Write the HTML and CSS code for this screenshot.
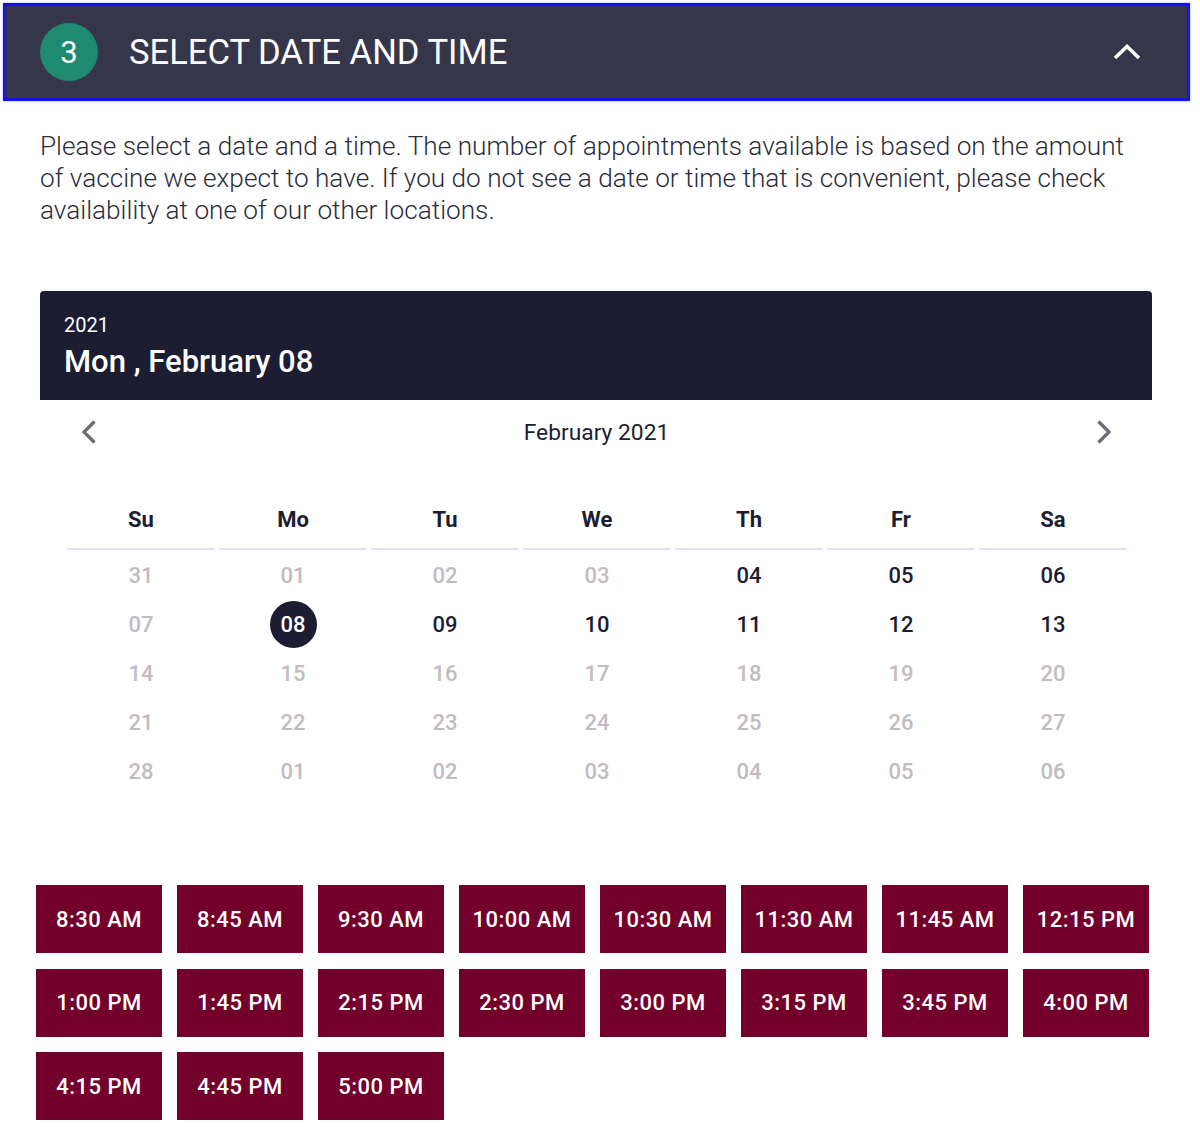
FILE: index.html
```html
<!DOCTYPE html>
<html lang="en">
<head>
<meta charset="utf-8">
<title>Select date and time</title>
<link rel="stylesheet" href="styles.css">
</head>
<body>
<section class="step">
  <header class="step-head">
    <span class="step-num">3</span>
    <h2 class="step-title">SELECT DATE AND TIME</h2>
    <svg class="step-toggle" width="28" height="18" viewBox="0 0 28 18" aria-hidden="true">
      <path d="M2 15 L14 3.5 L26 15" fill="none" stroke="#fff" stroke-width="3.6"/>
    </svg>
  </header>

  <div class="step-body">
    <p class="intro">Please select a date and a time. The number of appointments available is based on the amount of vaccine we expect to have. If you do not see a date or time that is convenient, please check availability at one of our other locations.</p>

    <div class="picker">
      <div class="picker-head">
        <div class="picker-year">2021</div>
        <div class="picker-date">Mon , February 08</div>
      </div>
      <div class="picker-nav">
        <svg class="nav-arrow" width="18" height="26" viewBox="0 0 18 26" aria-hidden="true">
          <path d="M14.5 2.5 L4 13 L14.5 23.5" fill="none" stroke="#6b6c75" stroke-width="3.2"/>
        </svg>
        <div class="nav-month">February 2021</div>
        <svg class="nav-arrow" width="18" height="26" viewBox="0 0 18 26" aria-hidden="true">
          <path d="M3.5 2.5 L14 13 L3.5 23.5" fill="none" stroke="#6b6c75" stroke-width="3.2"/>
        </svg>
      </div>
      <div class="cal">
        <div class="wd">Su</div><div class="wd">Mo</div><div class="wd">Tu</div><div class="wd">We</div><div class="wd">Th</div><div class="wd">Fr</div><div class="wd">Sa</div>

        <div class="d off">31</div><div class="d off">01</div><div class="d off">02</div><div class="d off">03</div><div class="d">04</div><div class="d">05</div><div class="d">06</div>
        <div class="d off">07</div><div class="d"><span class="sel">08</span></div><div class="d">09</div><div class="d">10</div><div class="d">11</div><div class="d">12</div><div class="d">13</div>
        <div class="d off">14</div><div class="d off">15</div><div class="d off">16</div><div class="d off">17</div><div class="d off">18</div><div class="d off">19</div><div class="d off">20</div>
        <div class="d off">21</div><div class="d off">22</div><div class="d off">23</div><div class="d off">24</div><div class="d off">25</div><div class="d off">26</div><div class="d off">27</div>
        <div class="d off">28</div><div class="d off">01</div><div class="d off">02</div><div class="d off">03</div><div class="d off">04</div><div class="d off">05</div><div class="d off">06</div>
      </div>
    </div>

    <div class="times">
      <button class="slot">8:30 AM</button>
      <button class="slot">8:45 AM</button>
      <button class="slot">9:30 AM</button>
      <button class="slot">10:00 AM</button>
      <button class="slot">10:30 AM</button>
      <button class="slot">11:30 AM</button>
      <button class="slot">11:45 AM</button>
      <button class="slot">12:15 PM</button>
      <button class="slot">1:00 PM</button>
      <button class="slot">1:45 PM</button>
      <button class="slot">2:15 PM</button>
      <button class="slot">2:30 PM</button>
      <button class="slot">3:00 PM</button>
      <button class="slot">3:15 PM</button>
      <button class="slot">3:45 PM</button>
      <button class="slot">4:00 PM</button>
      <button class="slot">4:15 PM</button>
      <button class="slot">4:45 PM</button>
      <button class="slot">5:00 PM</button>
    </div>
  </div>
</section>
</body>
</html>
```

FILE: styles.css
```css
* { box-sizing: border-box; }

html, body {
  margin: 0;
  padding: 0;
  background: #ffffff;
  font-family: Roboto, "Liberation Sans", Arial, sans-serif;
}

.step {
  padding: 3px 10px 0 3px;
}

.step-head {
  display: flex;
  align-items: center;
  height: 98px;
  padding: 0 46px 0 34px;
  background: #35364a;
  border: 3px solid #1414f0;
  box-shadow: 0 0 2px rgba(40, 40, 255, 0.5);
}

.step-num {
  display: flex;
  align-items: center;
  justify-content: center;
  width: 58px;
  height: 58px;
  border-radius: 50%;
  background: #1e8a72;
  color: #ffffff;
  font-size: 31px;
  font-weight: 400;
  flex: none;
}

.step-title {
  margin: 0 0 0 31px;
  flex: 1;
  color: #ffffff;
  font-size: 34.6px;
  font-weight: 400;
}

.step-toggle {
  flex: none;
  display: block;
}

.step-body {
  padding: 0 35px 0 37px;
}

.intro {
  margin: 29px 0 0 0;
  width: 1112px;
  font-size: 26.2px;
  line-height: 32px;
  font-weight: 300;
  color: #2c2d3c;
}

.picker {
  margin: 65px 0 0 0;
  width: 1112px;
}

.picker-head {
  height: 109px;
  padding: 22px 24px 0 24px;
  background: #1c1d33;
  border-radius: 4px 4px 0 0;
  color: #ffffff;
}

.picker-year {
  font-size: 20px;
  line-height: 24px;
  font-weight: 400;
}

.picker-date {
  margin-top: 6px;
  font-size: 31px;
  line-height: 38px;
  font-weight: 500;
}

.picker-nav {
  display: flex;
  align-items: center;
  justify-content: space-between;
  height: 64px;
  padding: 0 39px 0 40px;
}

.nav-arrow { display: block; }

.nav-month {
  font-size: 22.8px;
  color: #1c1d33;
}

.cal {
  display: grid;
  grid-template-columns: repeat(7, 152px);
  grid-template-rows: 57px repeat(5, 49px);
  margin: 29px 0 0 25px;
}

.wd {
  display: flex;
  align-items: center;
  justify-content: center;
  margin: 0 2px;
  padding-bottom: 3px;
  border-bottom: 2px solid #e4e2f2;
  font-size: 22px;
  font-weight: 700;
  color: #1c1d33;
}

.d {
  display: flex;
  align-items: center;
  justify-content: center;
  padding-top: 1px;
  font-size: 22px;
  font-weight: 500;
  color: #1c1d33;
}

.d.off { color: #c2bcc2; }

.sel {
  display: flex;
  align-items: center;
  justify-content: center;
  width: 47px;
  height: 47px;
  border-radius: 50%;
  background: #1c1d33;
  color: #ffffff;
}

.times {
  display: grid;
  grid-template-columns: repeat(8, 126px);
  column-gap: 15px;
  row-gap: 15.5px;
  margin: 90px 0 0 -4px;
}

.slot {
  height: 68px;
  border: none;
  padding: 0;
  background: #72002a;
  color: #ffffff;
  font-family: Roboto, "Liberation Sans", Arial, sans-serif;
  font-size: 22px;
  font-weight: 500;
  letter-spacing: 0.5px;
}
```
